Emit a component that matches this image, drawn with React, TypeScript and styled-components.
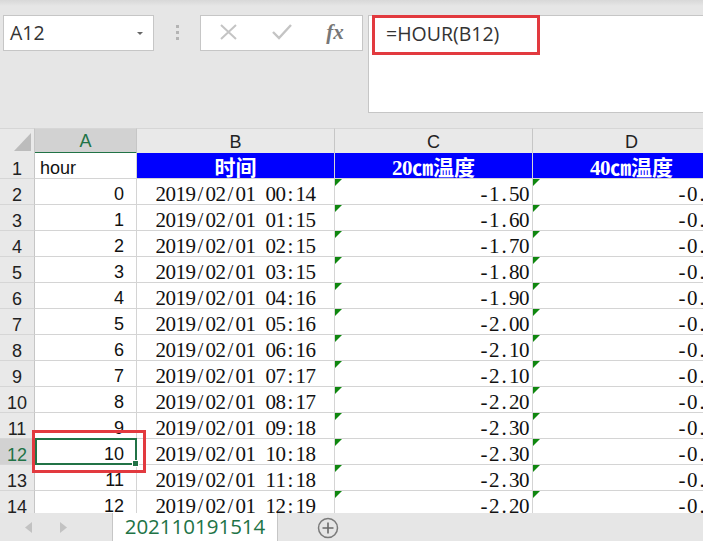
import * as React from "react";
import styled, { createGlobalStyle } from "styled-components";

const GlobalStyle = createGlobalStyle`
  html, body {
    margin: 0;
    padding: 0;
    background: #e6e6e6;
  }
  body {
    font-family: "Open Sans", "Liberation Sans", sans-serif;
  }
`;

const GREEN = "#217346";
const GRID = "#d4d4d4";
const COLS = "35px 102px 198px 198px 198px";

const Window = styled.div`
  width: 703px;
  height: 541px;
  overflow: hidden;
  display: flex;
  flex-direction: column;
  background: #e6e6e6;
`;

/* ---------- formula bar ---------- */

const Toolbar = styled.div`
  flex: none;
  height: 128px;
  box-sizing: border-box;
  padding: 15px 0 0 3px;
  display: flex;
  align-items: flex-start;
  background: linear-gradient(#d8d8d8, #e6e6e6 6px);
`;

const NameBox = styled.div`
  width: 151px;
  height: 36px;
  box-sizing: border-box;
  background: #fff;
  border: 1px solid #c6c6c6;
  display: flex;
  align-items: center;
  justify-content: space-between;
  padding: 0 10px 2px 6px;
  font-size: 19.5px;
  color: #333;
`;

const Caret = styled.span`
  width: 0;
  height: 0;
  border-left: 3px solid transparent;
  border-right: 3px solid transparent;
  border-top: 3px solid #666;
  margin-top: 2px;
`;

const Grip = styled.div`
  width: 46px;
  height: 36px;
  display: flex;
  flex-direction: column;
  align-items: center;
  justify-content: center;
  gap: 3px;
  padding-bottom: 2px;
  box-sizing: border-box;
`;

const GripDot = styled.span`
  width: 3px;
  height: 3px;
  background: #b4b4b4;
`;

const FxBox = styled.div`
  width: 163px;
  height: 36px;
  box-sizing: border-box;
  background: #fff;
  border: 1px solid #c6c6c6;
  display: flex;
  align-items: center;
  justify-content: space-between;
  padding: 0 17px 0 17px;
`;

const FxIcon = styled.span`
  width: 20px;
  display: flex;
  justify-content: center;
  font-family: "Liberation Serif", serif;
  font-style: italic;
  font-weight: bold;
  font-size: 21px;
  color: #777;
  margin-bottom: 2px;
`;

const FormulaBox = styled.div`
  flex: 1;
  height: 98px;
  margin-left: 5px;
  box-sizing: border-box;
  background: #fff;
  border: 1px solid #c6c6c6;
  border-right: none;
  padding-left: 3px;
`;

const Callout = styled.div`
  width: 168px;
  height: 40px;
  margin-top: -1px;
  box-sizing: border-box;
  border: 3px solid #e23a3f;
  display: flex;
  align-items: center;
  padding: 0 0 3px 11px;
  font-size: 19.5px;
  color: #333;
`;

/* ---------- sheet ---------- */

const Sheet = styled.div`
  flex: 1;
  overflow: hidden;
  background: #fff;
`;

const Row = styled.div<{ $head?: boolean }>`
  display: grid;
  grid-template-columns: ${COLS};
  width: 731px;
  height: ${(p) => (p.$head ? "25px" : "26px")};
`;

const Corner = styled.div`
  background: #e9e9e9;
  border-top: 1px solid #d6d6d6;
  border-right: 1px solid #c6c6c6;
  border-bottom: 1px solid #bdbdbd;
  box-sizing: border-box;
  display: flex;
  align-items: flex-end;
  justify-content: flex-end;
  padding: 0 3px 2px 0;
`;

const CornerMark = styled.span`
  width: 17px;
  height: 18px;
  background: #bcbcbc;
  clip-path: polygon(100% 0, 100% 100%, 0 100%);
`;

const ColHead = styled.div<{ $active?: boolean }>`
  box-sizing: border-box;
  background: ${(p) => (p.$active ? "#d2d2d2" : "#e9e9e9")};
  border-top: 1px solid #d6d6d6;
  border-right: 1px solid #c6c6c6;
  border-bottom: ${(p) => (p.$active ? `2px solid ${GREEN}` : "1px solid #bdbdbd")};
  color: ${(p) => (p.$active ? GREEN : "#222")};
  font-family: "Liberation Sans", sans-serif;
  font-size: 18px;
  display: flex;
  align-items: center;
  justify-content: center;
  padding-top: ${(p) => (p.$active ? "2px" : "3px")};
`;

const RowHead = styled.div<{ $active?: boolean }>`
  box-sizing: border-box;
  background: ${(p) => (p.$active ? "#d2d2d2" : "#e9e9e9")};
  border-right: 1px solid #c6c6c6;
  border-bottom: 1px solid #d6d6d6;
  color: ${(p) => (p.$active ? GREEN : "#222")};
  font-family: "Liberation Sans", sans-serif;
  font-size: 18px;
  display: flex;
  align-items: flex-end;
  justify-content: center;
  padding-bottom: 0;
  line-height: 1;
`;

const Cell = styled.div<{
  $align?: "left" | "right" | "center";
  $banner?: boolean;
  $flag?: boolean;
  $song?: boolean;
}>`
  position: relative;
  box-sizing: border-box;
  background: ${(p) => (p.$banner ? "#0000ff" : "#fff")};
  border-right: 1px solid ${GRID};
  border-bottom: 1px solid ${GRID};
  display: flex;
  align-items: flex-end;
  justify-content: ${(p) =>
    p.$align === "right" ? "flex-end" : p.$align === "center" ? "center" : "flex-start"};
  padding: ${(p) =>
    p.$song ? "0 3px 0 3px" : p.$align === "right" ? "0 12px 1px 5px" : "0 5px 1px 5px"};
  line-height: ${(p) => (p.$song ? 0.9 : 1)};
  white-space: nowrap;
  font-family: ${(p) =>
    p.$banner
      ? `"Liberation Serif", "Noto Sans CJK SC", serif`
      : p.$song
        ? `"Liberation Serif", serif`
        : `"Liberation Sans", sans-serif`};
  font-size: ${(p) => (p.$song ? "21px" : "18px")};
  font-weight: ${(p) => (p.$banner ? "bold" : "normal")};
  color: ${(p) => (p.$banner ? "#fff" : "#111")};

  &::before {
    content: "";
    display: ${(p) => (p.$flag ? "block" : "none")};
    position: absolute;
    left: 0;
    top: 0;
    width: 7px;
    height: 7px;
    background: #0f870f;
    clip-path: polygon(0 0, 100% 0, 0 100%);
  }
`;

const Marquee = styled.span`
  position: absolute;
  z-index: 2;
  left: 0;
  top: -1px;
  right: -1px;
  bottom: -1px;
  border: 2px solid ${GREEN};
`;

const Handle = styled.span`
  position: absolute;
  z-index: 3;
  right: -3px;
  bottom: -3px;
  width: 5px;
  height: 5px;
  background: ${GREEN};
  border: 1px solid #fff;
`;

const RedRing = styled.span`
  position: absolute;
  z-index: 4;
  left: -3px;
  top: -9px;
  right: -10px;
  bottom: -9px;
  border: 3px solid #e23a3f;
`;

const Glyph = styled.span<{ $wide?: boolean }>`
  display: inline-block;
  width: ${(p) => (p.$wide ? "21px" : "10px")};
  text-align: center;
`;

/* ---------- sheet tabs ---------- */

const TabBar = styled.div`
  flex: none;
  height: 28px;
  display: flex;
  align-items: stretch;
  background: #e6e6e6;
`;

const NavArrows = styled.div`
  width: 112px;
  display: flex;
  align-items: center;
  gap: 26px;
  padding-left: 25px;
  box-sizing: border-box;
`;

const SheetTab = styled.div`
  width: 166px;
  box-sizing: border-box;
  background: #fff;
  border-left: 1px solid #c6c6c6;
  border-right: 1px solid #c6c6c6;
  box-shadow: 0 2px 0 #bdbdbd;
  display: flex;
  align-items: center;
  justify-content: center;
  font-size: 20.5px;
  color: ${GREEN};
  padding-bottom: 3px;
`;

const AddSheet = styled.div`
  display: flex;
  align-items: center;
  padding: 2px 0 0 39px;
`;

/* ---------- data ---------- */

const rows: [number, string, string, string][] = [
  [0, "00:14", "-1.50", "-0.50"],
  [1, "01:15", "-1.60", "-0.50"],
  [2, "02:15", "-1.70", "-0.60"],
  [3, "03:15", "-1.80", "-0.60"],
  [4, "04:16", "-1.90", "-0.70"],
  [5, "05:16", "-2.00", "-0.70"],
  [6, "06:16", "-2.10", "-0.80"],
  [7, "07:17", "-2.10", "-0.80"],
  [8, "08:17", "-2.20", "-0.90"],
  [9, "09:18", "-2.30", "-0.90"],
  [10, "10:18", "-2.30", "-0.90"],
  [11, "11:18", "-2.30", "-0.90"],
  [12, "12:19", "-2.20", "-0.90"],
];

function Song({ text }: { text: string }) {
  return (
    <>
      {Array.from(text).map((c, i) => (
        <Glyph key={i} $wide={c.charCodeAt(0) > 255}>
          {c === " " ? "\u00a0" : c}
        </Glyph>
      ))}
    </>
  );
}

function Cross() {
  return (
    <svg width="19" height="16" viewBox="0 0 19 16">
      <path d="M2 1 L17 15 M17 1 L2 15" stroke="#c4c4c4" strokeWidth="2" fill="none" />
    </svg>
  );
}

function Check() {
  return (
    <svg width="20" height="16" viewBox="0 0 20 16">
      <path d="M1 8 L7 14 L19 1" stroke="#c4c4c4" strokeWidth="2.4" fill="none" />
    </svg>
  );
}

function Arrow({ dir }: { dir: "left" | "right" }) {
  return (
    <svg width="8" height="11" viewBox="0 0 8 11">
      <polygon
        points={dir === "left" ? "7,0 7,11 0,5.5" : "1,0 1,11 8,5.5"}
        fill="#c2c2c2"
      />
    </svg>
  );
}

function PlusCircle() {
  return (
    <svg width="22" height="22" viewBox="0 0 22 22">
      <circle cx="11" cy="11" r="9.5" stroke="#7a7a7a" strokeWidth="1.5" fill="none" />
      <path d="M11 5.5 V16.5 M5.5 11 H16.5" stroke="#6a6a6a" strokeWidth="1.6" />
    </svg>
  );
}

export default function App() {
  return (
    <Window>
      <GlobalStyle />
      <Toolbar>
        <NameBox>
          <span>A12</span>
          <Caret />
        </NameBox>
        <Grip>
          <GripDot />
          <GripDot />
          <GripDot />
        </Grip>
        <FxBox>
          <FxIcon>
            <Cross />
          </FxIcon>
          <FxIcon>
            <Check />
          </FxIcon>
          <FxIcon>fx</FxIcon>
        </FxBox>
        <FormulaBox>
          <Callout>=HOUR(B12)</Callout>
        </FormulaBox>
      </Toolbar>

      <Sheet>
        <Row $head>
          <Corner>
            <CornerMark />
          </Corner>
          <ColHead $active>A</ColHead>
          <ColHead>B</ColHead>
          <ColHead>C</ColHead>
          <ColHead>D</ColHead>
        </Row>
        <Row>
          <RowHead>1</RowHead>
          <Cell>hour</Cell>
          <Cell $banner $song $align="center">
            <Song text="时间" />
          </Cell>
          <Cell $banner $song $align="center">
            <Song text="20㎝温度" />
          </Cell>
          <Cell $banner $song $align="center">
            <Song text="40㎝温度" />
          </Cell>
        </Row>
        {rows.map(([hour, time, c, d], i) => {
          const n = i + 2;
          const selected = n === 12;
          return (
            <Row key={n}>
              <RowHead $active={selected}>{n}</RowHead>
              <Cell $align="right">
                {hour}
                {selected && (
                  <>
                    <Marquee />
                    <Handle />
                    <RedRing />
                  </>
                )}
              </Cell>
              <Cell $song $align="center">
                <Song text={`2019/02/01 ${time}`} />
              </Cell>
              <Cell $song $flag $align="right">
                <Song text={c} />
              </Cell>
              <Cell $song $flag $align="right">
                <Song text={d} />
              </Cell>
            </Row>
          );
        })}
      </Sheet>

      <TabBar>
        <NavArrows>
          <Arrow dir="left" />
          <Arrow dir="right" />
        </NavArrows>
        <SheetTab>202110191514</SheetTab>
        <AddSheet>
          <PlusCircle />
        </AddSheet>
      </TabBar>
    </Window>
  );
}
